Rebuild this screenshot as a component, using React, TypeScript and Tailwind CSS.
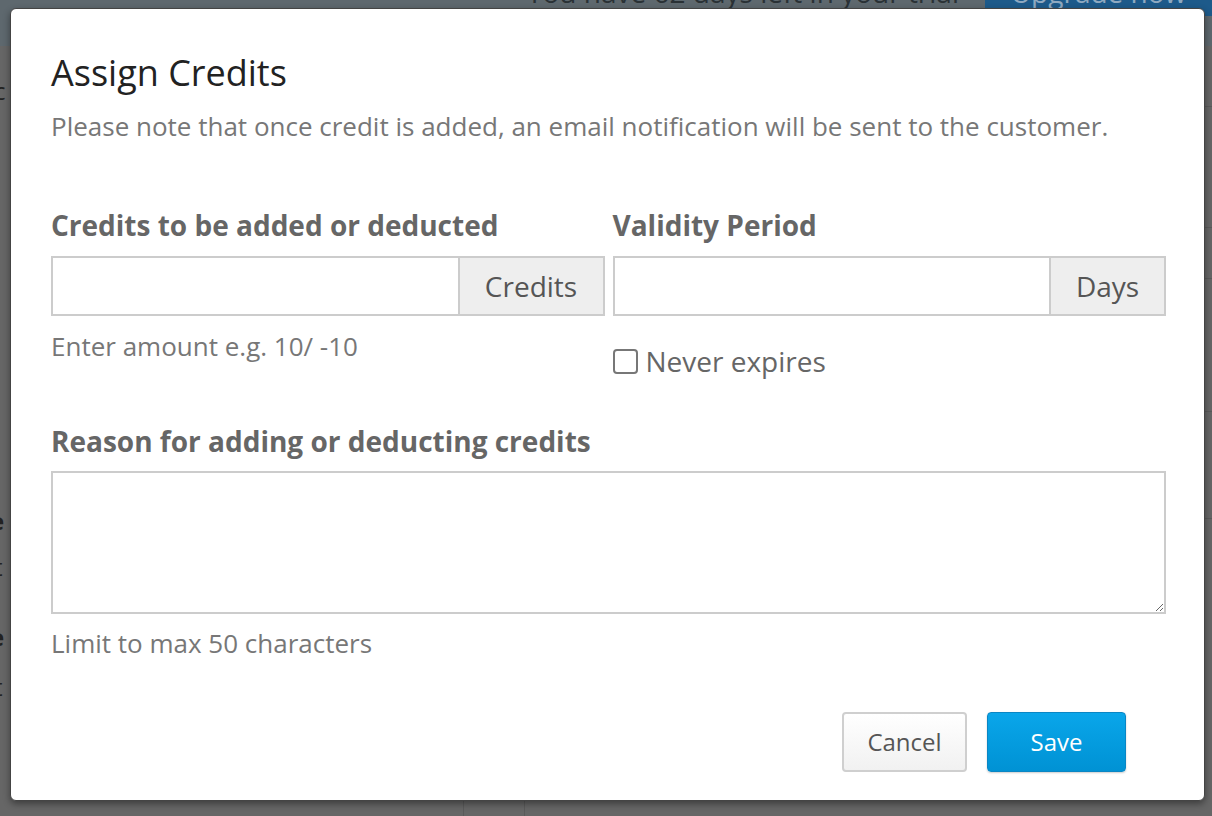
import { useState } from 'react';

const font = { fontFamily: '"Open Sans", "Noto Sans", sans-serif' };

function AddonInput({ unit, addonWidth }: { unit: string; addonWidth: string }) {
  return (
    <div className="flex h-[60px] border-2 border-[#cccccc]">
      <input type="text" className="min-w-0 flex-1 bg-white px-3 text-[26px] text-[#555] outline-none" />
      <span
        className={`flex items-center justify-center border-l-2 border-[#cccccc] bg-[#eeeeee] text-[28px] text-[#555] ${addonWidth}`}
      >
        {unit}
      </span>
    </div>
  );
}

export default function App() {
  const [neverExpires, setNeverExpires] = useState(false);

  return (
    <div className="relative h-[816px] w-[1212px] overflow-hidden bg-[#666666]" style={font}>
      {/* page behind the backdrop */}
      <div className="flex h-[46px] items-start bg-[#5e686e]">
        <div className="flex-1" />
        <span className="-mt-[30px] mr-[26px] text-[28px] leading-[44px] text-[#2a3135]">
          You have 62 days left in your trial
        </span>
        <span className="-mt-[30px] flex h-[46px] w-[227px] justify-center bg-[#1d5a8a] text-[28px] leading-[44px] text-[#8fa9c0]">
          Upgrade now
        </span>
      </div>
      <div className="flex">
        <div className="w-[10px] overflow-hidden text-[24px] leading-[30px] text-[#222]">
          <div className="mt-[30px] -ml-[6px]">c</div>
          <div className="mt-[400px] -ml-[10px] font-bold">e</div>
          <div className="mt-[16px] -ml-[6px]">t</div>
          <div className="mt-[40px] -ml-[10px] font-bold">e</div>
          <div className="mt-[20px] -ml-[6px]">t</div>
        </div>
        <div className="flex-1" />
        <div className="w-[8px]">
          <div className="mt-[60px] border-t border-[#5a5a5a]" />
          <div className="mt-[120px] border-t border-[#5a5a5a]" />
          <div className="mt-[50px] border-t border-[#5a5a5a]" />
          <div className="mt-[132px] border-t border-[#5a5a5a]" />
          <div className="mt-[106px] border-t border-[#5a5a5a]" />
        </div>
      </div>
      <div className="absolute bottom-0 left-[463px] h-[15px] w-[62px] border-x border-[#5a5a5a]" />

      {/* modal */}
      <div className="absolute left-[10px] top-[8px] flex h-[793px] w-[1195px] flex-col rounded-[6px] border border-[#444] bg-white pl-[40px] pr-[38px] pt-[40px] shadow-[0_3px_7px_rgba(0,0,0,0.4)]">
        <h2 className="text-[36px] leading-[48px] font-normal text-[#222]">Assign Credits</h2>
        <p className="mt-[12px] text-[26px] leading-[34px] text-[#777]">
          Please note that once credit is added, an email notification will be sent to the customer.
        </p>

        <div className="mt-[64px] grid grid-cols-2 gap-x-[8px]">
          <div>
            <label className="block text-[28px] leading-[36px] font-bold text-[#666]">
              Credits to be added or deducted
            </label>
            <div className="mt-[13px]">
              <AddonInput unit="Credits" addonWidth="w-[145px]" />
            </div>
            <p className="mt-[13px] text-[26px] leading-[34px] text-[#777]">Enter amount e.g. 10/ -10</p>
          </div>
          <div>
            <label className="block text-[28px] leading-[36px] font-bold text-[#666]">Validity Period</label>
            <div className="mt-[13px]">
              <AddonInput unit="Days" addonWidth="w-[115px]" />
            </div>
            <label className="mt-[28px] flex items-center gap-[8px] text-[28px] leading-[34px] text-[#666]">
              <input
                type="checkbox"
                checked={neverExpires}
                onChange={(e) => setNeverExpires(e.target.checked)}
                className="h-[25px] w-[25px] appearance-none rounded-[4px] border-2 border-[#777] bg-white"
              />
              Never expires
            </label>
          </div>
        </div>

        <label className="mt-[45px] block text-[28px] leading-[36px] font-bold text-[#666]">
          Reason for adding or deducting credits
        </label>
        <textarea className="mt-[12px] h-[143px] w-full border-2 border-[#cccccc] px-3 py-2 text-[24px] text-[#555] outline-none" />
        <p className="mt-[12px] text-[26px] leading-[34px] text-[#777]">Limit to max 50 characters</p>

        <div className="mt-[52px] mr-[40px] flex justify-end gap-[20px]">
          <button className="h-[60px] w-[125px] rounded-[4px] border-2 border-[#cfcfcf] bg-gradient-to-b from-white to-[#f1f1f1] text-[24px] text-[#555]">
            Cancel
          </button>
          <button className="h-[60px] w-[139px] rounded-[4px] border border-[#0a86c4] bg-gradient-to-b from-[#0aa6ea] to-[#0092d4] text-[24px] text-white shadow-[0_1px_2px_rgba(0,0,0,0.2)]">
            Save
          </button>
        </div>
      </div>
    </div>
  );
}
